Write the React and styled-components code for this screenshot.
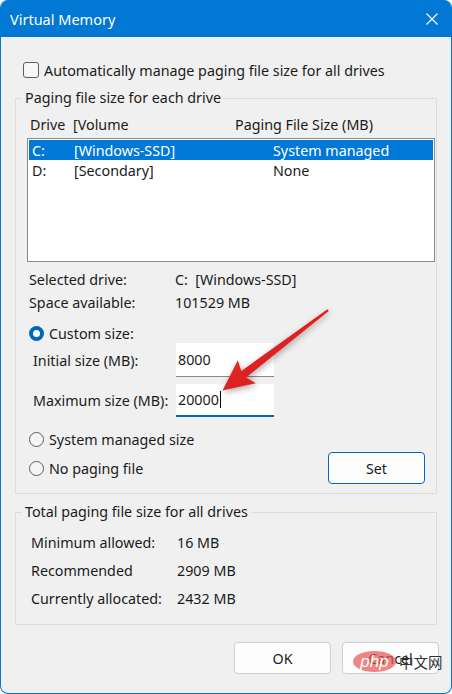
import React from 'react'
import styled, { createGlobalStyle } from 'styled-components'

const GlobalStyle = createGlobalStyle`
  html, body { margin: 0; padding: 0; background: #ffffff; }
  body { font-family: "Segoe UI", "Noto Sans", "Open Sans", sans-serif; }
`

const Window = styled.div`
  position: relative;
  width: 452px;
  height: 694px;
  box-sizing: border-box;
  border: 1px solid #0078d4;
  border-top: none;
  border-radius: 8px;
  background: #f0f0f0;
  overflow: hidden;
  display: flex;
  flex-direction: column;
  color: #1b1b1b;
  font-size: 14.3px;
`

const TitleBar = styled.div`
  height: 37px;
  flex: none;
  background: #0078d4;
  color: #fff;
  display: flex;
  align-items: center;
  justify-content: space-between;
  padding: 0 14px 0 10px;
  margin: 0 -1px;
  font-size: 14.5px;
`

const Body = styled.div`
  padding: 23px 14px 0 14px;
  display: flex;
  flex-direction: column;
`

const Row = styled.div`
  display: flex;
  align-items: center;
  height: ${p => p.$h || 20}px;
  margin-top: ${p => p.$mt || 0}px;
  padding-left: ${p => p.$pl || 0}px;
  padding-right: ${p => p.$pr || 0}px;
  justify-content: ${p => p.$between ? 'space-between' : 'flex-start'};
`

const CheckBox = styled.span`
  width: 14px;
  height: 14px;
  border: 1px solid #5d5d5d;
  border-radius: 3px;
  background: #f7f7f7;
  margin-right: 5px;
  flex: none;
`

const Radio = styled.span`
  width: ${p => p.$on ? 15 : 13}px;
  height: ${p => p.$on ? 15 : 13}px;
  border-radius: 50%;
  flex: none;
  margin-right: 5px;
  box-sizing: content-box;
  border: ${p => p.$on ? 'none' : '1px solid #5d5d5d'};
  background: ${p => p.$on ? '#0067c0' : '#f5f5f5'};
  display: flex;
  align-items: center;
  justify-content: center;
  &::after {
    content: '';
    display: ${p => p.$on ? 'block' : 'none'};
    width: 7px;
    height: 7px;
    border-radius: 50%;
    background: #fff;
  }
`

const Group = styled.fieldset`
  margin: ${p => p.$mt || 0}px 0 0 0;
  padding: 0 0 ${p => p.$pb || 0}px 0;
  border: 1px solid #dcdcdc;
  min-width: 0;
`

const Legend = styled.legend`
  margin-left: 6px;
  padding: 0 3px;
  line-height: 20px;
  height: 20px;
`

const Cell = styled.span`
  width: ${p => p.$w ? p.$w + 'px' : 'auto'};
  flex: none;
  white-space: nowrap;
`

const ListBox = styled.div`
  margin: 4px 0 0 11px;
  width: 408px;
  height: 124px;
  box-sizing: border-box;
  border: 1px solid #8a8a8a;
  background: #fff;
  padding: 1px;
`

const ListRow = styled.div`
  display: flex;
  align-items: center;
  height: 20px;
  padding-left: 3px;
  background: ${p => p.$sel ? '#0078d7' : 'transparent'};
  color: ${p => p.$sel ? '#fff' : '#1b1b1b'};
`

const Input = styled.div`
  width: 98px;
  height: ${p => p.$h}px;
  box-sizing: border-box;
  background: #fff;
  border-bottom: ${p => p.$focus ? '2px solid #0067c0' : '1px solid #8a8a8a'};
  display: flex;
  align-items: center;
  padding-left: 2px;
`

const Caret = styled.span`
  display: inline-block;
  width: 1px;
  height: 17px;
  background: #000;
  margin-left: 1px;
`

const Button = styled.div`
  width: 97px;
  height: 32px;
  box-sizing: border-box;
  border: 1px solid ${p => p.$def ? '#0067c0' : '#d0d0d0'};
  border-radius: 4px;
  background: #fdfdfd;
  display: flex;
  align-items: center;
  justify-content: center;
`

const Footer = styled.div`
  display: flex;
  justify-content: flex-end;
  gap: 11px;
  margin-top: 17px;
  margin-right: -2px;
`

const Overlay = styled.svg`
  position: absolute;
  left: 0;
  top: 0;
  pointer-events: none;
`

const Watermark = styled.div`
  position: absolute;
  left: 352px;
  top: 651px;
  display: flex;
  align-items: center;
  pointer-events: none;
`

const Pill = styled.span`
  width: 43px;
  height: 21px;
  border-radius: 50%;
  background: rgba(232, 86, 86, 0.72);
  color: #fff;
  font-style: italic;
  font-family: "Liberation Sans", sans-serif;
  font-size: 17px;
  display: flex;
  align-items: center;
  justify-content: center;
`

const Han = styled.span`
  margin-left: 3px;
  font-family: "Noto Sans CJK SC", sans-serif;
  font-size: 14.5px;
  color: #333;
`

export default function App() {
  return (
    <Window>
      <GlobalStyle />
      <TitleBar>
        <span>Virtual Memory</span>
        <svg width="12" height="12" viewBox="0 0 12 12">
          <path d="M0.5 0.5 L11.5 11.5 M11.5 0.5 L0.5 11.5" stroke="#fff" strokeWidth="1.1" />
        </svg>
      </TitleBar>
      <Body>
        <Row $pl={8}>
          <CheckBox />
          <span>Automatically manage paging file size for all drives</span>
        </Row>

        <Group $mt={8} $pb={9}>
          <Legend>Paging file size for each drive</Legend>
          <Row $mt={6} $pl={14}>
            <Cell $w={43}>Drive</Cell>
            <Cell $w={162}>[Volume</Cell>
            <Cell>Paging File Size (MB)</Cell>
          </Row>
          <ListBox>
            <ListRow $sel>
              <Cell $w={42}>C:</Cell>
              <Cell $w={199}>[Windows-SSD]</Cell>
              <Cell>System managed</Cell>
            </ListRow>
            <ListRow>
              <Cell $w={42}>D:</Cell>
              <Cell $w={199}>[Secondary]</Cell>
              <Cell>None</Cell>
            </ListRow>
          </ListBox>
          <Row $mt={7} $pl={13}>
            <Cell $w={146}>Selected drive:</Cell>
            <Cell>C:&nbsp; [Windows-SSD]</Cell>
          </Row>
          <Row $mt={3} $pl={13}>
            <Cell $w={146}>Space available:</Cell>
            <Cell>101529 MB</Cell>
          </Row>
          <Row $mt={12} $pl={13} $h={19}>
            <Radio $on />
            <span>Custom size:</span>
          </Row>
          <Row $pl={17} $h={34}>
            <Cell $w={143}>Initial size (MB):</Cell>
            <Input $h={34}>8000</Input>
          </Row>
          <Row $mt={7} $pl={17} $h={33}>
            <Cell $w={143}>Maximum size (MB):</Cell>
            <Input $h={33} $focus>20000<Caret /></Input>
          </Row>
          <Row $mt={12} $pl={13}>
            <Radio />
            <span>System managed size</span>
          </Row>
          <Row $mt={3} $pl={13} $pr={11} $h={32} $between>
            <Row>
              <Radio />
              <span>No paging file</span>
            </Row>
            <Button $def>Set</Button>
          </Row>
        </Group>

        <Group $mt={8} $pb={16}>
          <Legend>Total paging file size for all drives</Legend>
          <Row $mt={10} $pl={15}>
            <Cell $w={146}>Minimum allowed:</Cell>
            <Cell>16 MB</Cell>
          </Row>
          <Row $mt={8} $pl={15}>
            <Cell $w={146}>Recommended</Cell>
            <Cell>2909 MB</Cell>
          </Row>
          <Row $mt={8} $pl={15}>
            <Cell $w={146}>Currently allocated:</Cell>
            <Cell>2432 MB</Cell>
          </Row>
        </Group>

        <Footer>
          <Button>OK</Button>
          <Button>Cancel</Button>
        </Footer>
      </Body>

      <Overlay width="452" height="694" viewBox="0 0 452 694">
        <defs>
          <filter id="shadow" x="-20%" y="-20%" width="140%" height="140%">
            <feGaussianBlur in="SourceAlpha" stdDeviation="3" />
            <feOffset dx="1" dy="2" result="b" />
            <feComponentTransfer><feFuncA type="linear" slope="0.35" /></feComponentTransfer>
            <feMerge><feMergeNode /><feMergeNode in="SourceGraphic" /></feMerge>
          </filter>
          <linearGradient id="red" x1="0" y1="0" x2="1" y2="1">
            <stop offset="0" stopColor="#e8332d" />
            <stop offset="1" stopColor="#d4141a" />
          </linearGradient>
        </defs>
        <polygon
          filter="url(#shadow)"
          fill="url(#red)"
          points="326.4,309.2 240.3,371 236.8,360.2 221.5,390.5 254.8,383.3 245.1,377.4 327.8,310.9"
        />
      </Overlay>

      <Watermark>
        <Pill>php</Pill>
        <Han>中文网</Han>
      </Watermark>
    </Window>
  )
}
